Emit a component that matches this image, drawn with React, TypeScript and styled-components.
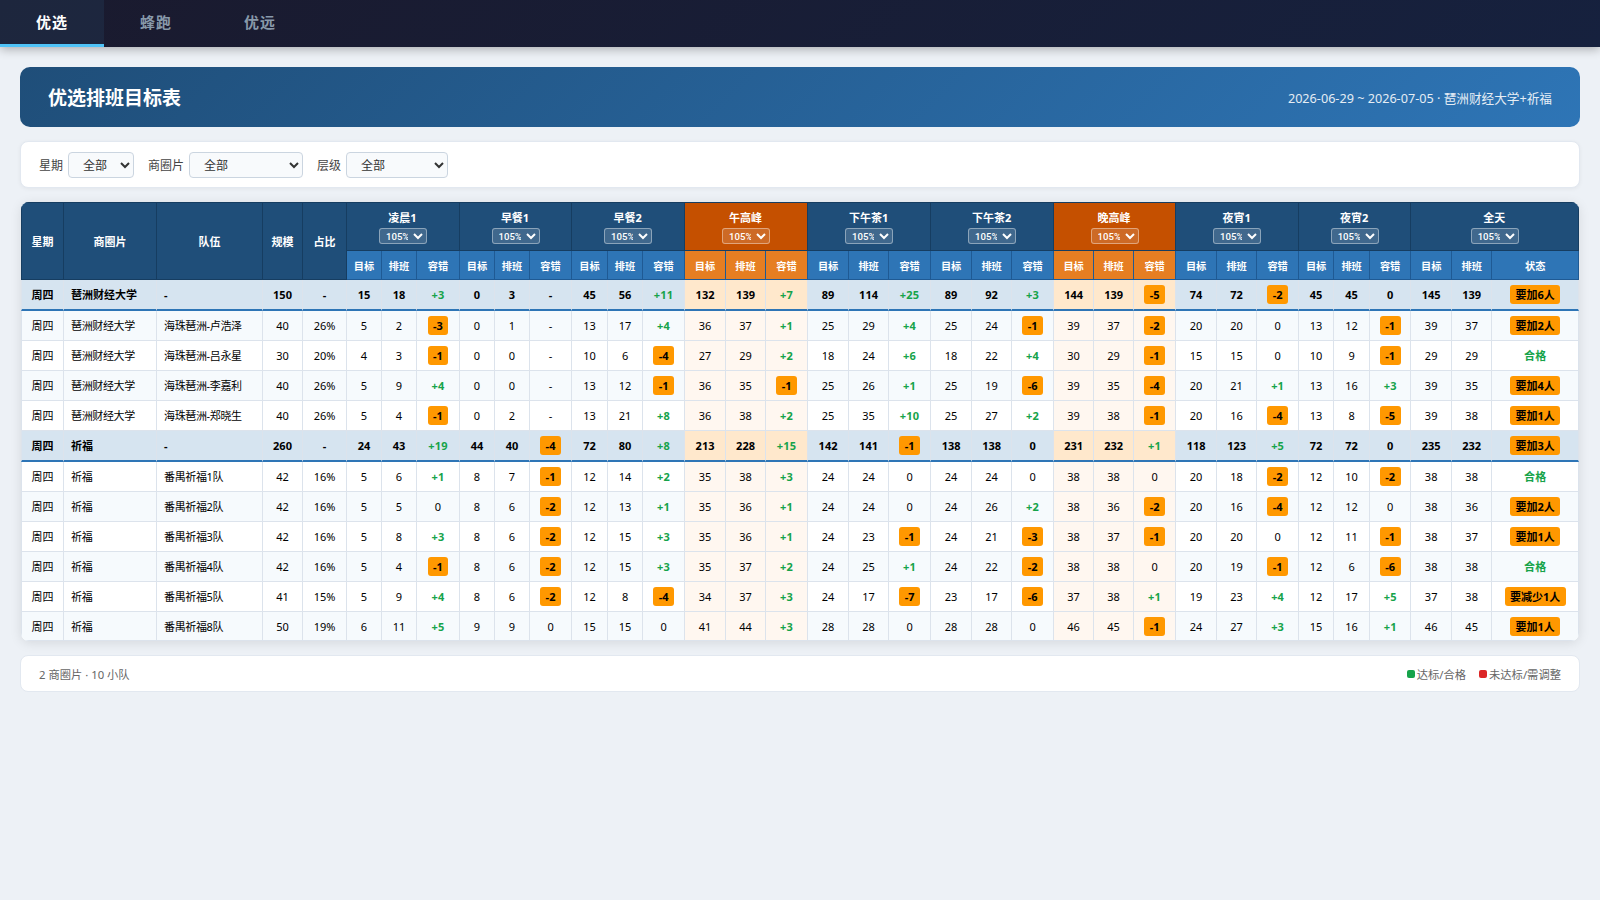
import React from "react";
import styled, { createGlobalStyle, css } from "styled-components";

const GlobalStyle = createGlobalStyle`
  * { box-sizing: border-box; margin: 0; padding: 0; }
  body {
    margin: 0;
    min-height: 100vh;
    background: #edf1f6;
    color: #000;
    font-family: "Noto Sans", "Noto Sans CJK SC", sans-serif;
    font-size: 12px;
  }
`;

const NavBar = styled.nav`
  display: flex;
  height: 47px;
  background: linear-gradient(135deg, #1a1a2e 0%, #16213e 100%);
  box-shadow: 0 2px 10px rgba(0, 0, 0, 0.3);
`;

const NavTab = styled.button<{ $active?: boolean }>`
  width: 104px;
  height: 47px;
  border: none;
  border-bottom: 3px solid ${(p) => (p.$active ? "#4fc3f7" : "transparent")};
  background: ${(p) => (p.$active ? "rgba(79, 195, 247, 0.08)" : "transparent")};
  color: ${(p) => (p.$active ? "#fff" : "#8899aa")};
  font: 700 15px/44px "Noto Sans", "Noto Sans CJK SC", sans-serif;
  letter-spacing: 1px;
`;

const Page = styled.main`
  display: flex;
  flex-direction: column;
  gap: 14px;
  padding: 20px;
`;

const Banner = styled.header`
  display: flex;
  align-items: center;
  justify-content: space-between;
  height: 60px;
  padding: 2px 28px 0;
  border-radius: 10px;
  background: linear-gradient(135deg, #1f4e79, #2e75b6);
  color: #fff;
`;

const Title = styled.h1`
  font-size: 19px;
  font-weight: 700;
  line-height: 26px;
`;

const Period = styled.div`
  font-size: 12.65px;
  line-height: 18px;
  opacity: 0.88;
`;

const Card = styled.section`
  display: flex;
  align-items: center;
  border: 1px solid #e2e8f0;
  border-radius: 8px;
  background: #fff;
  padding: 0 18px;
`;

const Filters = styled(Card)`
  gap: 14px;
  height: 47px;
  padding-top: 1px;
  box-shadow: 0 1px 4px rgba(0, 0, 0, 0.05);
`;

const Field = styled.label`
  display: flex;
  align-items: center;
  gap: 5px;
  line-height: 18px;
  color: #444;
`;

const FieldName = styled.span`
  padding-top: 2px;
`;

const FilterSelect = styled.select<{ $width: number }>`
  width: ${(p) => p.$width}px;
  height: 26px;
  padding: 0 10px;
  border: 1px solid #cbd5e0;
  border-radius: 4px;
  background: #f8fafc;
  color: #333;
  font: 12px "Noto Sans", "Noto Sans CJK SC", sans-serif;
`;

const TableWrap = styled.div`
  margin: 0 1px;
  border-radius: 8px;
  overflow: hidden;
  box-shadow: 0 2px 12px rgba(0, 0, 0, 0.1);
`;

const Table = styled.table`
  width: 1558px;
  table-layout: fixed;
  border-collapse: separate;
  border-spacing: 0;
  background: #fff;
`;

const headCell = css`
  border-right: 1px solid #163d61;
  border-bottom: 1px solid #163d61;
  color: #fff;
  font-weight: 700;
  text-align: center;
  vertical-align: middle;
  &:first-child { border-left: 1px solid #163d61; }
`;

const FixedHead = styled.th`
  ${headCell}
  border-top: 1px solid #163d61;
  background: #1f4e79;
  font-size: 11px;
`;

const GroupHead = styled.th<{ $peak?: boolean }>`
  ${headCell}
  height: 49px;
  border-top: 1px solid #163d61;
  background: ${(p) => (p.$peak ? "#c55000" : "#1f4e79")};
  font-size: 11px;
  line-height: 17px;
`;

const GroupName = styled.div`
  height: 18px;
  padding-right: 1px;
`;

const RateSelect = styled.select`
  display: block;
  width: 48px;
  height: 16px;
  margin: 1px auto 0;
  padding: 0 2px;
  border: 1px solid rgba(255, 255, 255, 0.4);
  border-radius: 3px;
  background: rgba(255, 255, 255, 0.15);
  color: #fff;
  font: 500 9.6px Roboto, "Liberation Sans", sans-serif;
`;

const SubHead = styled.th<{ $peak?: boolean }>`
  ${headCell}
  height: 29px;
  border-color: #1f5a94;
  &:first-child { border-left: none; }
  background: ${(p) => (p.$peak ? "#e67e22" : "#2e75b6")};
  font-size: 10.2px;
`;

const Cell = styled.td<{ $peak?: boolean; $left?: boolean }>`
  padding: ${(p) => (p.$left ? "0 7px" : "0")};
  border-right: 1px solid #dce3ec;
  border-bottom: 1px solid #dce3ec;
  text-align: ${(p) => (p.$left ? "left" : "center")};
  vertical-align: middle;
  white-space: nowrap;
  font-size: 11px;
  line-height: 17px;
  ${(p) => p.$peak && "background: #fff7f0;"}
  ${(p) => p.$left && "letter-spacing: -0.35px;"}
  &:first-child { border-left: 1px solid #dce3ec; }
`;

const Row = styled.tr<{ $total?: boolean }>`
  height: 30px;
  &:nth-child(even) { background: #f6fafd; }
  &:last-child { height: 29px; }
  ${(p) =>
    p.$total &&
    css`
      && { height: 31px; background: #d6e4f0; }
      ${Cell} {
        border-bottom: 2px solid #2e75b6;
        font-weight: 700;
        letter-spacing: 0;
      }
    `}
`;

const PeakTotalCell = styled(Cell)`
  background: #ffe8cc;
`;

const Good = styled.span`
  color: #16a34a;
  font-weight: 700;
  letter-spacing: 0.2px;
`;

const Badge = styled.span`
  display: inline-block;
  height: 19px;
  padding: 0 5.5px;
  border-radius: 3px;
  background: #ff9800;
  color: #000;
  font-weight: 700;
  line-height: 19px;
  vertical-align: middle;
`;

const Footer = styled(Card)`
  justify-content: space-between;
  height: 37px;
  color: #666;
  font-size: 11.3px;
`;

const Legend = styled.div`
  display: flex;
  gap: 13px;
`;

const LegendItem = styled.span<{ $color: string }>`
  display: flex;
  align-items: center;
  gap: 2px;
  &::before {
    content: "";
    width: 8px;
    height: 8px;
    border-radius: 2px;
    background: ${(p) => p.$color};
  }
`;

const COLUMN_WIDTHS = [
  43, 93, 106, 40, 44,
  35, 35, 43,
  35, 35, 42,
  36, 35, 42,
  41, 40, 42,
  41, 40, 42,
  41, 40, 42,
  40, 40, 42,
  41, 40, 42,
  35, 36, 41,
  41, 40, 87,
];

const FIXED_HEADS = ["星期", "商圈片", "队伍", "规模", "占比"];
const GROUPS = ["凌晨1", "早餐1", "早餐2", "午高峰", "下午茶1", "下午茶2", "晚高峰", "夜宵1", "夜宵2", "全天"];
const PEAKS = [3, 6];

interface Shift {
  area: string;
  team: string;
  values: string;
  total?: boolean;
}

const ROWS: Shift[] = [
  { area: "琶洲财经大学", team: "-", total: true, values: "150 - 15 18 +3 0 3 - 45 56 +11 132 139 +7 89 114 +25 89 92 +3 144 139 -5 74 72 -2 45 45 0 145 139 要加6人" },
  { area: "琶洲财经大学", team: "海珠琶洲-卢浩泽", values: "40 26% 5 2 -3 0 1 - 13 17 +4 36 37 +1 25 29 +4 25 24 -1 39 37 -2 20 20 0 13 12 -1 39 37 要加2人" },
  { area: "琶洲财经大学", team: "海珠琶洲-吕永星", values: "30 20% 4 3 -1 0 0 - 10 6 -4 27 29 +2 18 24 +6 18 22 +4 30 29 -1 15 15 0 10 9 -1 29 29 合格" },
  { area: "琶洲财经大学", team: "海珠琶洲-李嘉利", values: "40 26% 5 9 +4 0 0 - 13 12 -1 36 35 -1 25 26 +1 25 19 -6 39 35 -4 20 21 +1 13 16 +3 39 35 要加4人" },
  { area: "琶洲财经大学", team: "海珠琶洲-郑晓生", values: "40 26% 5 4 -1 0 2 - 13 21 +8 36 38 +2 25 35 +10 25 27 +2 39 38 -1 20 16 -4 13 8 -5 39 38 要加1人" },
  { area: "祈福", team: "-", total: true, values: "260 - 24 43 +19 44 40 -4 72 80 +8 213 228 +15 142 141 -1 138 138 0 231 232 +1 118 123 +5 72 72 0 235 232 要加3人" },
  { area: "祈福", team: "番禺祈福1队", values: "42 16% 5 6 +1 8 7 -1 12 14 +2 35 38 +3 24 24 0 24 24 0 38 38 0 20 18 -2 12 10 -2 38 38 合格" },
  { area: "祈福", team: "番禺祈福2队", values: "42 16% 5 5 0 8 6 -2 12 13 +1 35 36 +1 24 24 0 24 26 +2 38 36 -2 20 16 -4 12 12 0 38 36 要加2人" },
  { area: "祈福", team: "番禺祈福3队", values: "42 16% 5 8 +3 8 6 -2 12 15 +3 35 36 +1 24 23 -1 24 21 -3 38 37 -1 20 20 0 12 11 -1 38 37 要加1人" },
  { area: "祈福", team: "番禺祈福4队", values: "42 16% 5 4 -1 8 6 -2 12 15 +3 35 37 +2 24 25 +1 24 22 -2 38 38 0 20 19 -1 12 6 -6 38 38 合格" },
  { area: "祈福", team: "番禺祈福5队", values: "41 15% 5 9 +4 8 6 -2 12 8 -4 34 37 +3 24 17 -7 23 17 -6 37 38 +1 19 23 +4 12 17 +5 37 38 要减少1人" },
  { area: "祈福", team: "番禺祈福8队", values: "50 19% 6 11 +5 9 9 0 15 15 0 41 44 +3 28 28 0 28 28 0 46 45 -1 24 27 +3 15 16 +1 46 45 要加1人" },
];

function Value({ text }: { text: string }) {
  if (/^\+|^合格$/.test(text)) return <Good>{text}</Good>;
  if (/^-\d|^要/.test(text)) return <Badge>{text}</Badge>;
  return <>{text}</>;
}

function ShiftRow({ row }: { row: Shift }) {
  return (
    <Row $total={row.total}>
      <Cell>周四</Cell>
      <Cell $left>{row.area}</Cell>
      <Cell $left>{row.team}</Cell>
      {row.values.split(" ").map((text, i) => {
        const peak = i >= 2 && PEAKS.includes(Math.floor((i - 2) / 3));
        const Td = peak && row.total ? PeakTotalCell : Cell;
        return (
          <Td key={i} $peak={peak}>
            <Value text={text} />
          </Td>
        );
      })}
    </Row>
  );
}

export default function App() {
  return (
    <>
      <GlobalStyle />
      <NavBar>
        <NavTab $active>优选</NavTab>
        <NavTab>蜂跑</NavTab>
        <NavTab>优远</NavTab>
      </NavBar>
      <Page>
        <Banner>
          <Title>优选排班目标表</Title>
          <Period>2026-06-29 ~ 2026-07-05 · 琶洲财经大学+祈福</Period>
        </Banner>
        <Filters>
          <Field>
            <FieldName>星期</FieldName>
            <FilterSelect $width={66}><option>全部</option></FilterSelect>
          </Field>
          <Field>
            <FieldName>商圈片</FieldName>
            <FilterSelect $width={114}><option>全部</option></FilterSelect>
          </Field>
          <Field>
            <FieldName>层级</FieldName>
            <FilterSelect $width={102}><option>全部</option></FilterSelect>
          </Field>
        </Filters>
        <TableWrap>
          <Table>
            <colgroup>
              {COLUMN_WIDTHS.map((w, i) => <col key={i} width={w} />)}
            </colgroup>
            <thead>
              <tr>
                {FIXED_HEADS.map((h) => <FixedHead key={h} rowSpan={2}>{h}</FixedHead>)}
                {GROUPS.map((g, i) => (
                  <GroupHead key={g} colSpan={3} $peak={PEAKS.includes(i)}>
                    <GroupName>{g}</GroupName>
                    <RateSelect><option>105%</option></RateSelect>
                  </GroupHead>
                ))}
              </tr>
              <tr>
                {GROUPS.map((g, i) =>
                  ["目标", "排班", g === "全天" ? "状态" : "容错"].map((h) => (
                    <SubHead key={g + h} $peak={PEAKS.includes(i)}>{h}</SubHead>
                  ))
                )}
              </tr>
            </thead>
            <tbody>
              {ROWS.map((row) => <ShiftRow key={row.area + row.team} row={row} />)}
            </tbody>
          </Table>
        </TableWrap>
        <Footer>
          <span>2 商圈片 · 10 小队</span>
          <Legend>
            <LegendItem $color="#16a34a">达标/合格</LegendItem>
            <LegendItem $color="#dc2626">未达标/需调整</LegendItem>
          </Legend>
        </Footer>
      </Page>
    </>
  );
}
